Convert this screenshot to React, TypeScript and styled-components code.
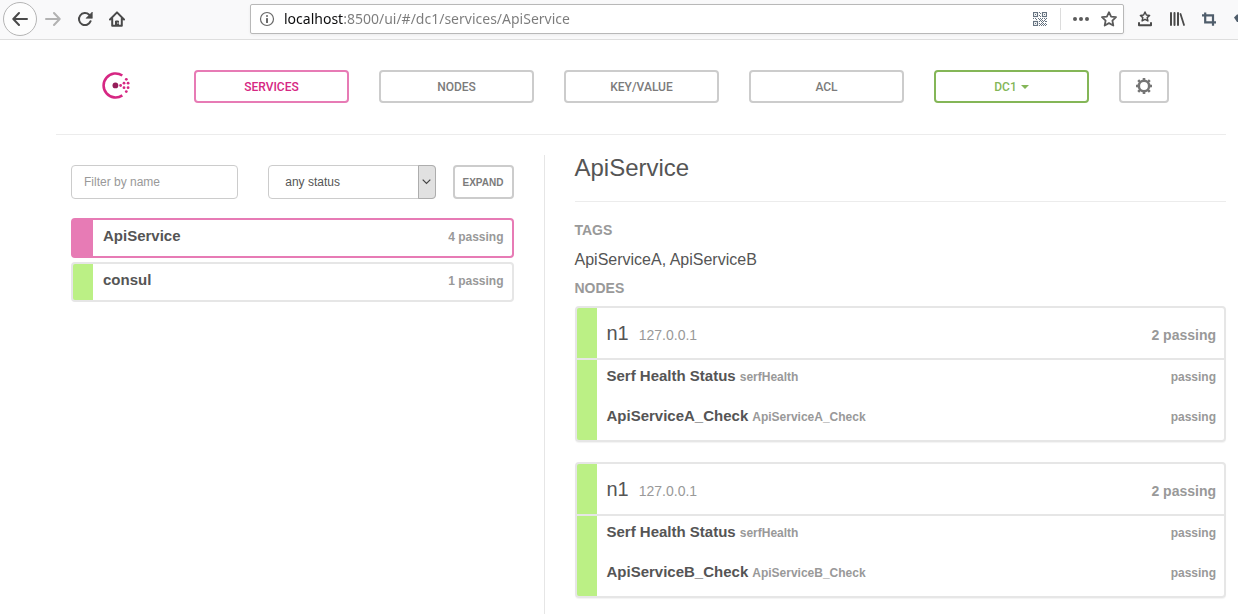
import React from "react";
import styled, { createGlobalStyle } from "styled-components";

const sans = '"Liberation Sans", Arial, sans-serif';
const pink = "#e77bb5";
const magenta = "#d62783";
const green = "#84b657";
const lime = "#bbf085";
const line = "#e6e6e6";
const control = "#cccccc";

const GlobalStyle = createGlobalStyle`
  *, *::before, *::after { box-sizing: border-box; }
  body { margin: 0; background: #fff; color: #555; font-family: ${sans}; overflow-x: hidden; }
  h1, h2, p, ul { margin: 0; padding: 0; }
  ul { list-style: none; }
  button { font-family: inherit; margin: 0; padding: 0; cursor: pointer; }
  svg { display: block; flex: none; }
`;

const Page = styled.div`
  display: flex;
  flex-direction: column;
  min-height: 100vh;
`;

/* Browser toolbar */

const Toolbar = styled.header`
  display: flex;
  align-items: center;
  height: 40px;
  padding: 0 0 2px 3px;
  background: #f9f9fa;
  border-bottom: 1px solid #dedede;
  overflow: hidden;
`;

const ToolButton = styled.button<{ $round?: boolean; $width?: number }>`
  display: flex;
  align-items: center;
  justify-content: center;
  flex: none;
  width: ${(p) => (p.$round ? 34 : p.$width ?? 32)}px;
  height: ${(p) => (p.$round ? 34 : 28)}px;
  border: ${(p) => (p.$round ? "1px solid #b5b5b5" : "0")};
  border-radius: ${(p) => (p.$round ? "50%" : "2px")};
  background: ${(p) => (p.$round ? "#fdfdfd" : "transparent")};
`;

const AddressBar = styled.div`
  display: flex;
  align-items: center;
  flex: 1;
  min-width: 0;
  height: 30px;
  margin: 0 5px 0 117px;
  padding-left: 8px;
  background: #fff;
  border: 1px solid #b8b8b8;
  border-radius: 2px;
  box-shadow: 0 1px 3px rgba(0, 0, 0, 0.06);
`;

const AddressInput = styled.input`
  flex: 1;
  min-width: 0;
  height: 28px;
  margin-left: 9px;
  padding: 0;
  border: 0;
  outline: 0;
  font: 14px/20px "Noto Sans", sans-serif;
  background: linear-gradient(90deg, #0c0c0d 60px, #7b7b7b 60px);
  background-clip: text;
  -webkit-text-fill-color: transparent;
`;

const AddressDivider = styled.span`
  width: 1px;
  height: 22px;
  margin: 0 6px 0 5px;
  background: #dcdcdc;
`;

/* Consul navigation */

const Container = styled.div`
  display: flex;
  flex-direction: column;
  flex: 1;
  padding: 0 12px 0 56px;
`;

const Nav = styled.nav`
  display: flex;
  align-items: center;
  gap: 30px;
  padding: 30px 57px 31px 46px;
  border-bottom: 1px solid #ececec;
`;

const Home = styled.a`
  display: block;
  margin-right: 34px;
`;

const NavLink = styled.a<{ $active?: boolean }>`
  flex: 1;
  height: 33px;
  padding-top: 1px;
  border: 2px solid ${(p) => (p.$active ? pink : control)};
  border-radius: 4px;
  color: ${(p) => (p.$active ? magenta : "#7b7b7b")};
  font: 500 12px/28px Roboto, sans-serif;
  text-align: center;
  text-decoration: none;
`;

const DatacenterButton = styled.button`
  display: flex;
  align-items: center;
  justify-content: center;
  gap: 4px;
  flex: 1;
  height: 33px;
  border: 2px solid ${green};
  border-radius: 4px;
  background: #fff;
  color: ${green};
  && {
    padding-top: 1px;
    font: 500 12px/28px Roboto, sans-serif;
  }
`;

const SettingsButton = styled.button`
  display: flex;
  align-items: center;
  justify-content: center;
  width: 50px;
  height: 33px;
  border: 2px solid ${control};
  border-radius: 4px;
  background: #fff;
  && { padding-bottom: 1px; }
`;

/* Two-column body */

const Columns = styled.main`
  display: grid;
  grid-template-columns: 5fr 7fr;
  flex: 1;
  padding-top: 20px;
`;

const ListColumn = styled.section`
  min-width: 0;
  padding: 10px 30px 0 15px;
`;

const DetailColumn = styled.section`
  min-width: 0;
  padding: 0 0 16px 30px;
  border-left: 1px solid ${line};
`;

const Filters = styled.form`
  display: flex;
  gap: 17px;
  margin-bottom: 19px;
`;

const FilterFields = styled.div`
  display: grid;
  grid-template-columns: repeat(2, minmax(0, 1fr));
  gap: 30px;
  flex: 1;
`;

const FilterInput = styled.input`
  width: 100%;
  height: 34px;
  padding: 0 12px;
  border: 1px solid ${control};
  border-radius: 4px;
  font: 12px/20px ${sans};
  color: #555;
  &::placeholder { color: #999; opacity: 1; }
`;

const SelectBox = styled.div`
  position: relative;
`;

const StatusSelect = styled.select`
  appearance: none;
  display: block;
  width: 100%;
  height: 34px;
  padding: 0 20px 0 16px;
  border: 1px solid ${control};
  border-radius: 4px;
  background: #fff;
  color: #555;
  font: 12px/20px ${sans};
`;

const SelectArrow = styled.span`
  display: flex;
  align-items: center;
  justify-content: center;
  position: absolute;
  top: 0;
  right: 0;
  bottom: 0;
  width: 18px;
  border: 1px solid #adadad;
  border-radius: 0 4px 4px 0;
  background: #e1e1e1;
  pointer-events: none;
`;

const ExpandButton = styled.button`
  width: 61px;
  height: 34px;
  border: 2px solid ${control};
  border-radius: 4px;
  background: #fff;
  color: #7b7b7b;
  && {
    padding-top: 2px;
    font: bold 10px/20px ${sans};
  }
`;

const ServiceList = styled.ul`
  display: flex;
  flex-direction: column;
  gap: 4px;
`;

const ServiceLink = styled.a<{ $active?: boolean }>`
  display: flex;
  height: 40px;
  border: 2px solid ${(p) => (p.$active ? pink : line)};
  border-radius: 4px;
  background: linear-gradient(90deg, ${(p) => (p.$active ? pink : lime)} 20px, #fff 20px);
  padding: 6px 8px 0 30px;
  align-items: baseline;
  justify-content: space-between;
  color: inherit;
  text-decoration: none;
`;

const Name = styled.span`
  color: #555;
  font: bold 15px/20px ${sans};
`;

const Note = styled.span`
  color: #999;
  font: bold 12px/20px ${sans};
`;

const Title = styled.h1`
  && { margin-bottom: 18px; }
  && { padding-bottom: 20px; }
  border-bottom: 1px solid #ececec;
  font: 24px/26px ${sans};
`;

const Label = styled.h2`
  color: #999;
  font: bold 14px/20px ${sans};
`;

const Tags = styled.p`
  && { margin: 8px 0 6px; }
  font: 16px/24px ${sans};
`;

const NodeList = styled.div`
  display: flex;
  flex-direction: column;
  gap: 20px;
  margin-top: 8px;
`;

const NodeCard = styled.article`
  border: 2px solid ${line};
  border-radius: 4px;
  background: linear-gradient(90deg, ${lime} 20px, #fff 20px);
  box-shadow: 0 1px 1px rgba(0, 0, 0, 0.05);
`;

const NodeHeader = styled.div`
  display: flex;
  align-items: baseline;
  height: 52px;
  padding: 10px 8px 0 30px;
  border-bottom: 2px solid ${line};
`;

const NodeName = styled.span`
  font: 20px/30px ${sans};
`;

const NodeAddress = styled.span`
  flex: 1;
  margin-left: 10px;
  color: #999;
  font: 14px/20px ${sans};
`;

const NodeSummary = styled.span`
  color: #999;
  font: bold 14px/20px ${sans};
`;

const CheckRow = styled.li`
  display: flex;
  align-items: baseline;
  gap: 4px;
  height: 40px;
  padding: 6px 8px 0 30px;
`;

const CheckId = styled(Note)`
  flex: 1;
`;

/* Icons */

const BackIcon = () => (
  <svg width="16" height="16" viewBox="0 0 16 16" fill="none" stroke="#4a4a4a" strokeWidth="2" strokeLinecap="round" strokeLinejoin="round">
    <path d="M15 8H1.5M7 2L1.3 8L7 14" />
  </svg>
);

const ForwardIcon = () => (
  <svg width="16" height="16" viewBox="0 0 16 16" fill="none" stroke="#b2b2b2" strokeWidth="2" strokeLinecap="round" strokeLinejoin="round">
    <path d="M1 8H14.5M9 2L14.7 8L9 14" />
  </svg>
);

const ReloadIcon = () => (
  <svg width="16" height="16" viewBox="0 0 16 16">
    <path d="M13.6 10.2A6 6 0 1 1 12.2 3.8" fill="none" stroke="#4a4a4a" strokeWidth="2" strokeLinecap="round" />
    <path d="M15.3 1V7.3H9Z" fill="#4a4a4a" stroke="#4a4a4a" strokeWidth=".6" strokeLinejoin="round" />
  </svg>
);

const HomeIcon = () => (
  <svg width="16" height="16" viewBox="0 0 16 16" fill="none" stroke="#4a4a4a" strokeWidth="2" strokeLinecap="round" strokeLinejoin="round">
    <path d="M1 8.5L8 1.4L15 8.5M3.2 7.5V14.8H12.8V7.5" />
    <path d="M6.5 14.5V10H9.5V14.5" fill="#4a4a4a" strokeWidth="1" />
    <path d="M8.9 11.6V12.6" stroke="#fff" strokeWidth=".8" />
  </svg>
);

const InfoIcon = () => (
  <svg width="16" height="16" viewBox="0 0 16 16">
    <circle cx="8" cy="8" r="6.5" fill="none" stroke="#686868" strokeWidth="1.2" />
    <rect x="7" y="4" width="2" height="2" rx="1" fill="#686868" />
    <rect x="7" y="7" width="2" height="5" rx=".6" fill="#686868" />
  </svg>
);

const qrCells = [
  [6, 0], [7, 1], [6, 3], [7, 4], [0, 6], [2, 6], [3, 7], [5, 6], [6, 7], [7, 6], [8, 7], [9, 6], [11, 6],
  [12, 7], [13, 6], [6, 9], [7, 8], [8, 9], [9, 8], [10, 9], [11, 8], [12, 9], [13, 9], [6, 11], [8, 11],
  [9, 10], [10, 11], [12, 11], [7, 12], [9, 12], [11, 12], [13, 12], [6, 13], [8, 13], [10, 13], [12, 13],
];

const QrIcon = () => (
  <svg width="14" height="14" viewBox="0 0 14 14" fill="#667380">
    {[[0, 0], [9, 0], [0, 9]].map(([x, y]) => (
      <g key={`${x}-${y}`}>
        <rect x={x + 0.5} y={y + 0.5} width="4" height="4" fill="none" stroke="#667380" strokeWidth="1.2" />
        <rect x={x + 2} y={y + 2} width="1" height="1" />
      </g>
    ))}
    {qrCells.map(([x, y]) => (
      <rect key={`${x}-${y}`} x={x} y={y} width="1" height="1" />
    ))}
  </svg>
);

const DotsIcon = () => (
  <svg width="16" height="16" viewBox="0 0 16 16" fill="#5b5b5b">
    <circle cx="2" cy="8" r="2" />
    <circle cx="8" cy="8" r="2" />
    <circle cx="14" cy="8" r="2" />
  </svg>
);

const StarIcon = () => (
  <svg width="16" height="16" viewBox="0 0 16 16" fill="none" stroke="#5b5b5b" strokeWidth="1.8" strokeLinejoin="round">
    <path d="M8 1.2L10.1 5.6L15 6.2L11.4 9.6L12.3 14.5L8 12.1L3.7 14.5L4.6 9.6L1 6.2L5.9 5.6Z" />
  </svg>
);

const BookmarksIcon = () => (
  <svg width="16" height="16" viewBox="0 0 16 16" fill="none" stroke="#4a4a4a" strokeLinejoin="round" strokeLinecap="round">
    <path d="M8 1L9.4 4L12.6 4.4L10.2 6.6L10.9 9.9L8 8.3L5.1 9.9L5.8 6.6L3.4 4.4L6.6 4Z" strokeWidth="1.5" />
    <path d="M2 12V14.3H14V12" strokeWidth="2" />
  </svg>
);

const LibraryIcon = () => (
  <svg width="16" height="16" viewBox="0 0 16 16" fill="none" stroke="#4a4a4a" strokeLinecap="round">
    <path d="M2 2V14M5.5 2V14M9 2V14" strokeWidth="2" />
    <path d="M11.5 3L15 14" strokeWidth="1.8" />
  </svg>
);

const CropIcon = () => (
  <svg width="16" height="16" viewBox="0 0 16 16" fill="none" stroke="#4f5d6b" strokeWidth="2.2">
    <path d="M4.2 1.5V11.3H15M1 4.4H12V14.8" />
  </svg>
);

const ExtensionIcon = () => (
  <svg width="16" height="16" viewBox="0 0 16 16" fill="#4f5d6b">
    <path d="M10 6.5L13 3.5H16V11H13Z" />
  </svg>
);

const ConsulLogo = () => (
  <svg width="28" height="30" viewBox="0 -0.2 28 30" fill={magenta}>
    <path d="M20.3 3.3A12 12 0 1 0 20.3 23.2" fill="none" stroke={magenta} strokeWidth="2.6" />
    <circle cx="13.4" cy="13.2" r="2.9" fill="#961d59" />
    {[[18.6, 13.3], [22, 11], [22, 15.5], [24.3, 7.1], [24.3, 19.4], [26.1, 11], [26.1, 15.5]].map(([x, y]) => (
      <circle key={`${x}-${y}`} cx={x} cy={y} r="1.4" />
    ))}
  </svg>
);

const CaretIcon = () => (
  <svg width="8" height="4" viewBox="0 0 8 4" fill={green}>
    <path d="M0 0H8L4 4Z" />
  </svg>
);

const ChevronIcon = () => (
  <svg width="9" height="6" viewBox="0 0 9 6" fill="none" stroke="#444" strokeWidth="1.2">
    <path d="M.7 .7L4.5 4.5L8.3 .7" />
  </svg>
);

const GearIcon = () => (
  <svg width="16" height="16" viewBox="0 0 16 16" fill="none" stroke="#757575" strokeWidth="2.6">
    <circle cx="8" cy="8" r="5.2" />
    <path d="M8 0V3M8 13V16M0 8H3M13 8H16M2.2 2.2L4.4 4.4M11.6 11.6L13.8 13.8M13.8 2.2L11.6 4.4M2.2 13.8L4.4 11.6" />
  </svg>
);

/* Data */

const services = [
  { name: "ApiService", status: "4 passing" },
  { name: "consul", status: "1 passing" },
];

const nodes = [
  { name: "n1", address: "127.0.0.1", summary: "2 passing", check: "ApiServiceA_Check" },
  { name: "n1", address: "127.0.0.1", summary: "2 passing", check: "ApiServiceB_Check" },
];

export default function App() {
  const selected = "ApiService";
  return (
    <Page>
      <GlobalStyle />
      <Toolbar>
        <ToolButton $round aria-label="Back"><BackIcon /></ToolButton>
        <ToolButton aria-label="Forward"><ForwardIcon /></ToolButton>
        <ToolButton aria-label="Reload"><ReloadIcon /></ToolButton>
        <ToolButton aria-label="Home"><HomeIcon /></ToolButton>
        <AddressBar>
          <InfoIcon />
          <AddressInput aria-label="Address" defaultValue="localhost:8500/ui/#/dc1/services/ApiService" />
          <ToolButton aria-label="QR code" $width={30}><QrIcon /></ToolButton>
          <AddressDivider />
          <ToolButton aria-label="Page actions" $width={28}><DotsIcon /></ToolButton>
          <ToolButton aria-label="Bookmark" $width={28}><StarIcon /></ToolButton>
        </AddressBar>
        <ToolButton aria-label="Bookmarks menu"><BookmarksIcon /></ToolButton>
        <ToolButton aria-label="Library"><LibraryIcon /></ToolButton>
        <ToolButton aria-label="Screenshot"><CropIcon /></ToolButton>
        <ToolButton aria-label="Extension" $width={13}><ExtensionIcon /></ToolButton>
      </Toolbar>

      <Container>
        <Nav>
          <Home href="#/" aria-label="Consul"><ConsulLogo /></Home>
          <NavLink href="#/dc1/services" $active>SERVICES</NavLink>
          <NavLink href="#/dc1/nodes">NODES</NavLink>
          <NavLink href="#/dc1/kv">KEY/VALUE</NavLink>
          <NavLink href="#/dc1/acls">ACL</NavLink>
          <DatacenterButton>DC1 <CaretIcon /></DatacenterButton>
          <SettingsButton aria-label="Settings"><GearIcon /></SettingsButton>
        </Nav>

        <Columns>
          <ListColumn>
            <Filters>
              <FilterFields>
                <FilterInput aria-label="Filter by name" placeholder="Filter by name" />
                <SelectBox>
                  <StatusSelect aria-label="Status">
                    <option>any status</option>
                  </StatusSelect>
                  <SelectArrow><ChevronIcon /></SelectArrow>
                </SelectBox>
              </FilterFields>
              <ExpandButton type="button">EXPAND</ExpandButton>
            </Filters>
            <ServiceList>
              {services.map((s) => (
                <li key={s.name}>
                  <ServiceLink href={`#/dc1/services/${s.name}`} $active={s.name === selected}>
                    <Name>{s.name}</Name>
                    <Note>{s.status}</Note>
                  </ServiceLink>
                </li>
              ))}
            </ServiceList>
          </ListColumn>

          <DetailColumn>
            <Title>{selected}</Title>
            <Label>TAGS</Label>
            <Tags>ApiServiceA, ApiServiceB</Tags>
            <Label>NODES</Label>
            <NodeList>
              {nodes.map((n) => (
                <NodeCard key={n.check}>
                  <NodeHeader>
                    <NodeName>{n.name}</NodeName>
                    <NodeAddress>{n.address}</NodeAddress>
                    <NodeSummary>{n.summary}</NodeSummary>
                  </NodeHeader>
                  <ul>
                    <CheckRow>
                      <Name>Serf Health Status</Name>
                      <CheckId>serfHealth</CheckId>
                      <Note>passing</Note>
                    </CheckRow>
                    <CheckRow>
                      <Name>{n.check}</Name>
                      <CheckId>{n.check}</CheckId>
                      <Note>passing</Note>
                    </CheckRow>
                  </ul>
                </NodeCard>
              ))}
            </NodeList>
          </DetailColumn>
        </Columns>
      </Container>
    </Page>
  );
}
